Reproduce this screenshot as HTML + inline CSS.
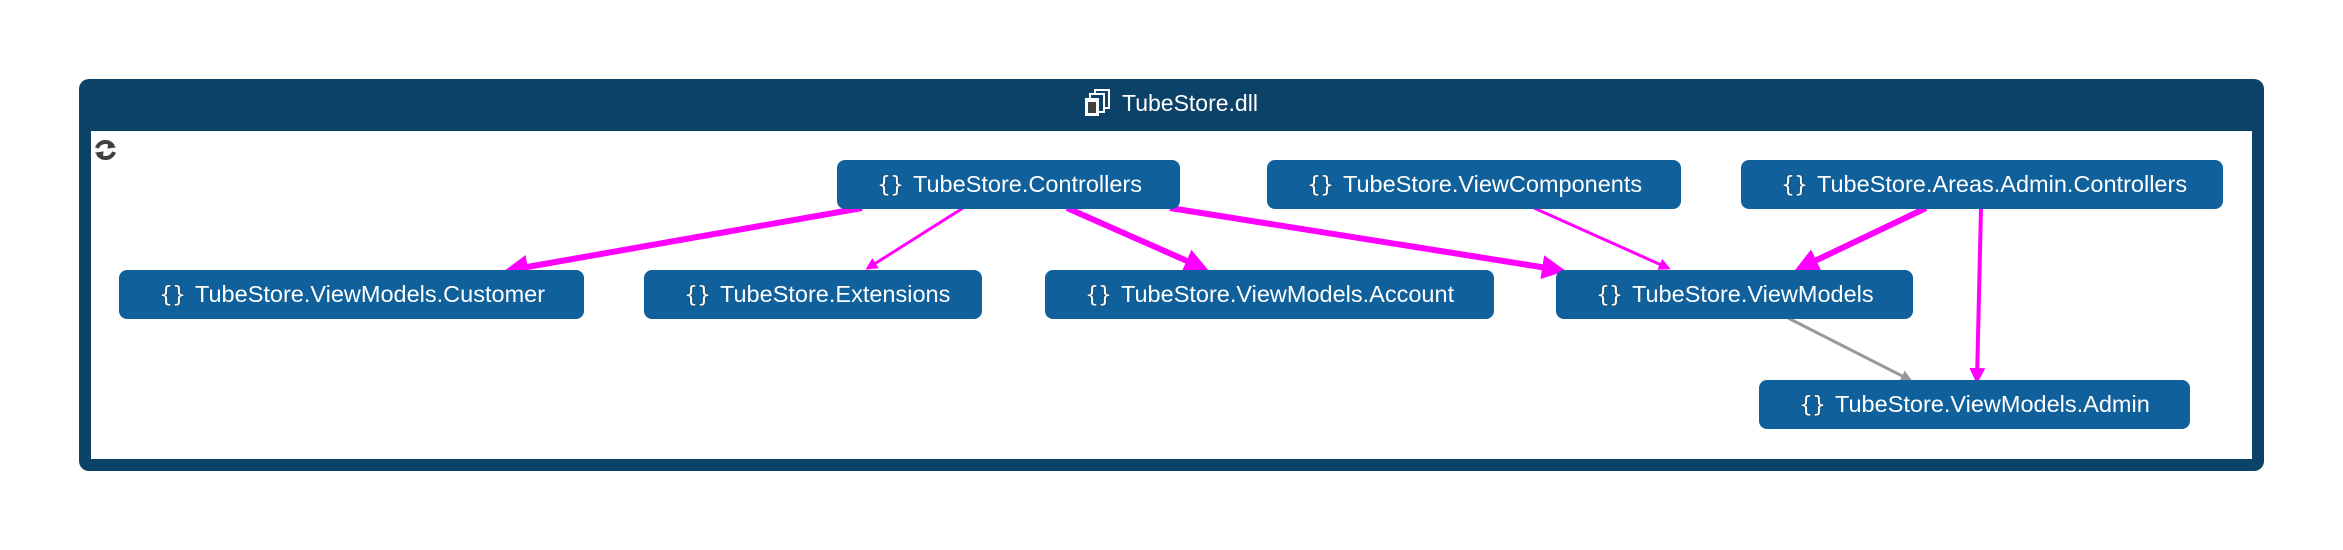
<!DOCTYPE html>
<html><head><meta charset="utf-8"><style>
html,body{margin:0;padding:0;background:#fff;}
body{width:2343px;height:550px;position:relative;overflow:hidden;font-family:"Liberation Sans",sans-serif;}
.outer{position:absolute;left:79px;top:79px;width:2185px;height:392px;background:#0c4168;border-radius:10px;}
.inner{position:absolute;left:91px;top:131px;width:2161px;height:328px;background:#fff;}
.title{position:absolute;left:1083px;top:87px;color:#fff;font-size:23px;line-height:32px;}
.node{position:absolute;height:49px;background:#0f609b;border-radius:8px;color:#fff;font-size:23.5px;line-height:49px;white-space:nowrap;}
.node span.b{display:inline-block;font-family:"DejaVu Sans",sans-serif;font-size:22px;letter-spacing:-1px;text-shadow:0 0 1px #333,0 0 1px #333;margin-right:10px;}
svg{position:absolute;left:0;top:0;}
</style></head><body>
<div class="outer"></div>
<div class="inner"></div>
<div class="title">
<svg width="30" height="30" viewBox="0 0 30 30" style="position:absolute;left:0;top:1px"><rect x="12" y="2" width="14" height="18" fill="none" stroke="#fff" stroke-width="2"/><rect x="7" y="6" width="14" height="18" fill="#0c4168" stroke="#fff" stroke-width="2"/><rect x="2" y="10" width="14" height="18" fill="#fff"/><rect x="5" y="14" width="8" height="11" fill="#404040"/></svg>
<span style="position:absolute;left:39px;top:0">TubeStore.dll</span></div>
<svg width="2343" height="550">
<defs>
<marker id="m" markerWidth="4" markerHeight="4" refX="3" refY="2" orient="auto"><path d="M0,0 L4,2 L0,4z" fill="#f0f"/></marker>
<marker id="g" markerWidth="4" markerHeight="4" refX="3" refY="2" orient="auto"><path d="M0,0 L4,2 L0,4z" fill="#999"/></marker>
</defs>
<g stroke="#f0f" fill="none">
<line x1="862" y1="208" x2="510" y2="270" stroke-width="6" marker-end="url(#m)"/>
<line x1="963" y1="208" x2="868" y2="268" stroke-width="3" marker-end="url(#m)" />
<line x1="1067" y1="208" x2="1203" y2="268" stroke-width="6" marker-end="url(#m)"/>
<line x1="1170" y1="208" x2="1560" y2="270" stroke-width="6" marker-end="url(#m)"/>
<line x1="1534" y1="208" x2="1668" y2="268" stroke-width="3" marker-end="url(#m)"/>
<line x1="1926" y1="208" x2="1800" y2="268" stroke-width="6" marker-end="url(#m)"/>
<line x1="1981" y1="208" x2="1977" y2="380" stroke-width="4" marker-end="url(#m)"/>
</g>
<line x1="1788" y1="318" x2="1910" y2="380" stroke="#999" stroke-width="3" marker-end="url(#g)"/>
<g transform="translate(93,138)" fill="none" stroke="#404040" stroke-width="4">
<path d="M20,8 A9,9 0 0 0 4,10"/><path d="M5,16 A9,9 0 0 0 21,14"/>
<path d="M16,3 L22,9 L15,10z" fill="#404040" stroke-width="1"/><path d="M9,21 L3,15 L10,14z" fill="#404040" stroke-width="1"/>
</g>
</svg>
<div class="node" style="left:837px;top:160px;width:343px"><span style="margin-left:40px" class="b">{}</span>TubeStore.Controllers</div>
<div class="node" style="left:1267px;top:160px;width:414px"><span style="margin-left:40px" class="b">{}</span>TubeStore.ViewComponents</div>
<div class="node" style="left:1741px;top:160px;width:482px"><span style="margin-left:40px" class="b">{}</span>TubeStore.Areas.Admin.Controllers</div>
<div class="node" style="left:119px;top:270px;width:465px"><span style="margin-left:40px" class="b">{}</span>TubeStore.ViewModels.Customer</div>
<div class="node" style="left:644px;top:270px;width:338px"><span style="margin-left:40px" class="b">{}</span>TubeStore.Extensions</div>
<div class="node" style="left:1045px;top:270px;width:449px"><span style="margin-left:40px" class="b">{}</span>TubeStore.ViewModels.Account</div>
<div class="node" style="left:1556px;top:270px;width:357px"><span style="margin-left:40px" class="b">{}</span>TubeStore.ViewModels</div>
<div class="node" style="left:1759px;top:380px;width:431px"><span style="margin-left:40px" class="b">{}</span>TubeStore.ViewModels.Admin</div>
</body></html>
